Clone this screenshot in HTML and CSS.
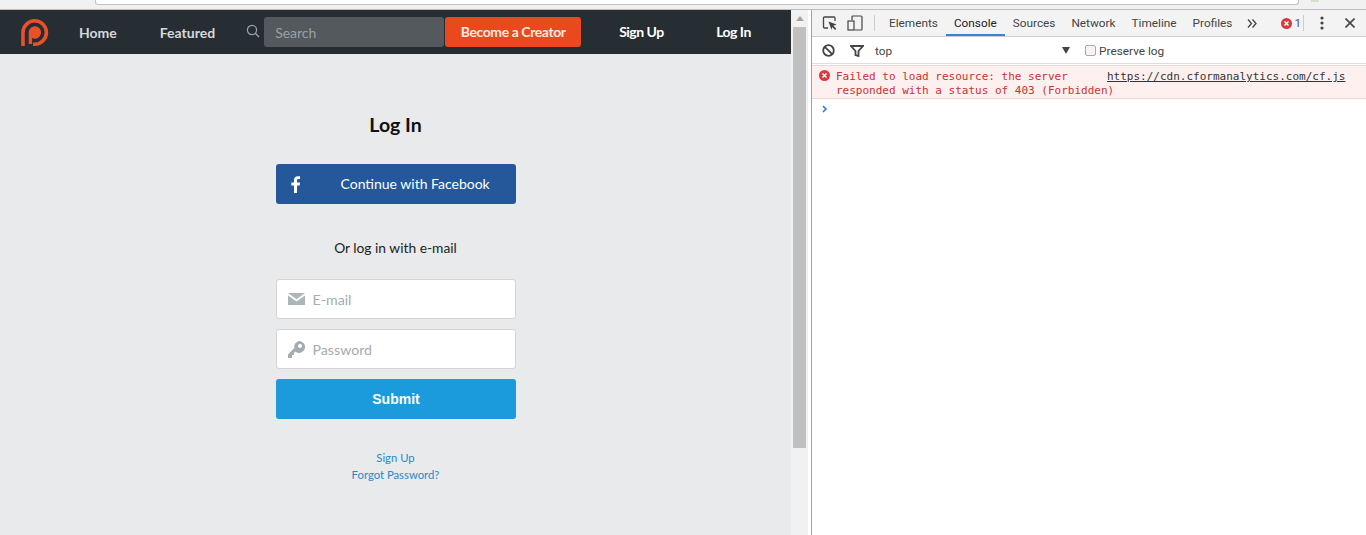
FILE: index.html
```html
<!DOCTYPE html>
<html lang="en">
<head>
<meta charset="utf-8">
<title>Log In</title>
<link rel="stylesheet" href="styles.css">
</head>
<body>
<div class="chrome"><div class="urlbox"></div><div class="ext"></div></div>
<div class="main">
  <div class="page">
    <nav class="nav">
      <a class="logo"><svg width="30" height="30" viewBox="0 0 30 30"><path d="M3 28V14.500a11.700 11.700 0 1 1 11.700 11.700H13" fill="none" stroke="#e8512a" stroke-width="3.600"/><path d="M8.700 26V14.500a6.200 6.200 0 1 1 3.400 5.500V26z" fill="#e8512a"/></svg></a>
      <a class="nav-link home">Home</a>
      <a class="nav-link featured">Featured</a>
      <svg class="search-icon" width="14" height="14" viewBox="0 0 14 14"><circle cx="6" cy="6" r="4.600" fill="none" stroke="#9aa3a8" stroke-width="1.200"/><path d="M9.300 9.300L13 13" stroke="#9aa3a8" stroke-width="1.400"/></svg>
      <div class="search">Search</div>
      <a class="creator">Become a Creator</a>
      <a class="nav-link signup">Sign Up</a>
      <a class="nav-link login">Log In</a>
    </nav>
    <main class="form">
      <h1 class="title">Log In</h1>
      <a class="fb"><svg class="fb-icon" width="10" height="17" viewBox="0 0 10 17"><path d="M3 17V9.400H.4V6.500H3V4.300C3 1.600 4.500 .2 6.800 .2c1 0 1.900.1 2.200.1v2.700H7.500C6.300 3 6 3.600 6 4.500v2H9l-.4 2.900H6V17z" fill="#fff"/></svg><span class="fb-text">Continue with Facebook</span></a>
      <p class="or">Or log in with e-mail</p>
      <div class="field"><svg class="field-icon" width="17" height="12" viewBox="0 0 17 12"><path d="M0 0h17L8.500 6.200z M0 2.500l8.500 6 8.500-6V12H0z" fill="#adb5b8"/></svg><span>E-mail</span></div>
      <div class="field"><svg class="field-icon" width="17" height="17" viewBox="0 0 17 17"><path d="M11 0a6 6 0 1 1-3.800 10.600L6 12v2H4v3H0v-3.500l6.400-6.400A6 6 0 0 1 11 0z M12 3a2 2 0 1 0 0 4 2 2 0 0 0 0-4z" fill="#a4acaf" fill-rule="evenodd"/></svg><span>Password</span></div>
      <a class="submit">Submit</a>
      <a class="small-link first">Sign Up</a>
      <a class="small-link">Forgot Password?</a>
    </main>
  </div>
  <div class="scrollbar"><div class="arrow"></div><div class="thumb"></div></div>
  <aside class="devtools">
    <div class="tabs">
      <svg class="dt-icon inspect" width="16" height="16" viewBox="0 0 16 16"><path d="M6 13H2.500a1 1 0 0 1-1-1V3a1 1 0 0 1 1-1h9.500a1 1 0 0 1 1 1v3" fill="none" stroke="#444" stroke-width="1.300"/><path d="M6.500 6.500l8 3-3.200 1.300 3 3-1.200 1.200-3-3L9.500 15z" fill="#444"/></svg>
      <svg class="dt-icon device" width="16" height="16" viewBox="0 0 16 16"><rect x="1" y="6" width="6" height="9" fill="none" stroke="#444" stroke-width="1.200"/><path d="M5 5V2a1 1 0 0 1 1-1h8a1 1 0 0 1 1 1v12a1 1 0 0 1-1 1H7.500" fill="none" stroke="#444" stroke-width="1.200"/></svg>
      <span class="sep"></span>
      <span class="tab">Elements</span>
      <span class="tab active">Console</span>
      <span class="tab">Sources</span>
      <span class="tab">Network</span>
      <span class="tab">Timeline</span>
      <span class="tab">Profiles</span>
      <svg class="more" width="10" height="9" viewBox="0 0 10 9"><path d="M1 .5l3.500 4L1 8.500M5.500 .5l3.500 4-3.500 4" fill="none" stroke="#444" stroke-width="1.300"/></svg>
      <svg class="err-icon" width="11" height="11" viewBox="0 0 11 11"><circle cx="5.500" cy="5.500" r="5.500" fill="#d9393e"/><path d="M3.500 3.500l4 4M7.500 3.500l-4 4" stroke="#fff" stroke-width="1.500"/></svg>
      <span class="err-count">1</span>
      <span class="sep sep2"></span>
      <svg class="dots" width="4" height="14" viewBox="0 0 4 14"><circle cx="2" cy="2" r="1.600" fill="#444"/><circle cx="2" cy="7" r="1.600" fill="#444"/><circle cx="2" cy="12" r="1.600" fill="#444"/></svg>
      <svg class="close" width="10" height="10" viewBox="0 0 10 10"><path d="M.5.500l9 9M9.500.500l-9 9" stroke="#444" stroke-width="1.600"/></svg>
    </div>
    <div class="filter">
      <svg class="ban" width="13" height="13" viewBox="0 0 13 13"><circle cx="6.500" cy="6.500" r="5.300" fill="none" stroke="#444" stroke-width="1.800"/><path d="M2.800 2.800l7.400 7.400" stroke="#444" stroke-width="1.800"/></svg>
      <svg class="funnel" width="14" height="12" viewBox="0 0 14 12"><path d="M1 1h12L8.500 6v5L5.500 10V6z" fill="none" stroke="#444" stroke-width="1.800"/></svg>
      <span class="context">top</span>
      <span class="caret"></span>
      <span class="check"></span>
      <span class="preserve">Preserve log</span>
    </div>
    <div class="error">
      <svg class="err-icon msg" width="11" height="11" viewBox="0 0 11 11"><circle cx="5.500" cy="5.500" r="5.500" fill="#d9393e"/><path d="M3.500 3.500l4 4M7.500 3.500l-4 4" stroke="#fff" stroke-width="1.500"/></svg>
      <div class="msg-text">Failed to load resource: the server<br>responded with a status of 403 (Forbidden)</div>
      <a class="msg-link">https://cdn.cformanalytics.com/cf.js</a>
    </div>
    <svg class="prompt" width="6" height="8" viewBox="0 0 6 8"><path d="M1 1l3 3-3 3" fill="none" stroke="#2f79d0" stroke-width="1.600"/></svg>
  </aside>
</div>
</body>
</html>
```

FILE: styles.css
```css
* { box-sizing: border-box; }
html, body { margin: 0; padding: 0; height: 535px; overflow: hidden; background: #fff; }
a { display: block; }

.chrome { height: 10px; display: flex; align-items: flex-start; background: #f1f1f1; border-bottom: 1px solid #bdbdbd; padding-left: 95px; }
.urlbox { width: 1204px; height: 5px; background: #fff; border: 1px solid #c2c2c2; border-top: 0; border-radius: 0 0 3px 3px; }
.ext { width: 8px; height: 2px; margin-left: 12px; background: #cfe3c8; }

.main { display: flex; height: 525px; }
.page { width: 791px; background: #e9eaec; font-family: Lato, sans-serif; flex: none; }

.nav { height: 44px; background: #262d33; display: flex; align-items: center; font-family: Lato, sans-serif; }
.logo { margin-left: 20px; width: 30px; height: 30px; margin-top: 2px; }
.nav-link { font-size: 14px; font-weight: 700; color: #fff; letter-spacing: -.5px; }
.home { margin-left: 29px; color: #d5d9dc; letter-spacing: 0; }
.featured { margin-left: 43px; color: #d5d9dc; letter-spacing: 0; }
.search-icon { margin-left: 31px; margin-top: -2px; }
.search { margin-left: 4px; width: 180px; height: 30px; border-radius: 3px; background: #53595d; color: #9ba1a5; font-size: 14px; line-height: 31px; padding-left: 11px; }
.creator { margin-left: 1px; width: 136px; height: 30px; border-radius: 3px; background: #e9491d; color: #fbe9e2; font-size: 14px; font-weight: 700; letter-spacing: -.42px; line-height: 29px; text-align: center; }
.signup { margin-left: 38px; line-height: 20px; margin-top: -1px; }
.login { margin-left: 52.500px; line-height: 20px; margin-top: -1px; }

.form { width: 240px; margin: 0 auto; display: flex; flex-direction: column; align-items: stretch; text-align: center; }
.title { margin: 57px 0 0; font-size: 19.500px; line-height: 28px; font-weight: 700; color: #111; }
.fb { margin-top: 25px; height: 40px; border-radius: 3px; background: #24589b; color: #fff; display: flex; align-items: center; padding-left: 15px; font-size: 14px; }
.fb-icon { flex: none; }
.fb-text { margin-left: 40px; margin-top: -2px; }
.or { margin: 35px 0 0; font-size: 13.800px; line-height: 18px; color: #222; }
.field { margin-top: 10px; height: 40px; background: #fff; border: 1px solid #d3d5d7; border-radius: 3px; display: flex; align-items: center; color: #a6abaf; font-size: 14.200px; padding-left: 11px; }
.or + .field { margin-top: 22px; }
.field-icon { flex: none; width: 17px; }
.field span { margin-left: 8px; }
.submit { margin-top: 10px; height: 40px; border-radius: 3px; background: #1b9bdc; color: #fff; font-family: "Liberation Sans", Arial, sans-serif; font-weight: 700; font-size: 14px; line-height: 40px; padding-left: 1px; }
.small-link { font-size: 11.300px; line-height: 17px; color: #2b88c6; }
.first { margin-top: 30px; }

.scrollbar { width: 17px; flex: none; background: #f1f1f1; padding: 0 2px; }
.arrow { width: 0; height: 0; margin: 6px auto 6px; border: 4px solid transparent; border-top: 0; border-bottom: 5px solid #a3a3a3; }
.thumb { width: 13px; height: 421px; background: #c0c0c0; }

.devtools { flex: 1; margin-left: 3px; border-left: 1px solid #a0a0a0; background: #fff; font-family: Roboto, sans-serif; font-size: 11.800px; color: #444; min-width: 0; }
.tabs { height: 27px; background: #f3f3f3; border-bottom: 1px solid #ccc; display: flex; align-items: center; }
.inspect { margin-left: 10px; }
.device { margin-left: 9px; }
.sep { width: 1px; height: 16px; background: #ccc; margin-left: 11px; margin-right: 6px; }
.tab { height: 26px; line-height: 27px; padding: 0 8px; }
.tab.active { color: #222; border-bottom: 2px solid #3f80d0; }
.more { margin-left: 7px; }
.tabs .err-icon { margin-left: 24px; }
.err-count { margin-left: 2px; color: #555; }
.sep2 { margin-left: 2px; margin-right: 0; }
.dots { margin-left: 16px; }
.close { margin-left: 21px; }

.filter { height: 27px; display: flex; align-items: center; border-bottom: 1px solid #ddd; padding-top: 1px; }
.ban { margin-left: 10px; }
.funnel { margin-left: 15px; }
.context { margin-left: 11px; }
.caret { margin-left: 170px; border: 4px solid transparent; border-top: 7px solid #444; border-bottom: 0; width: 0; height: 0; }
.check { margin-left: 15px; width: 11px; height: 11px; border: 1px solid #aaa; border-radius: 2px; background: #f4f4f4; }
.preserve { margin-left: 3px; }

.error { margin-top: 1px; height: 34px; background: #fff0f0; border-top: 1px solid #f5d5d5; border-bottom: 1px solid #f5d5d5; display: flex; align-items: flex-start; font-family: "DejaVu Sans Mono", monospace; font-size: 11px; line-height: 14px; color: #c9302f; padding-top: 4px; }
.msg { margin-left: 7px; flex: none; }
.msg-text { margin-left: 6px; white-space: nowrap; width: 271px; }
.msg-link { color: #333; text-decoration: underline; white-space: nowrap; }
.prompt { display: block; margin: 6px 0 0 10px; }
```
